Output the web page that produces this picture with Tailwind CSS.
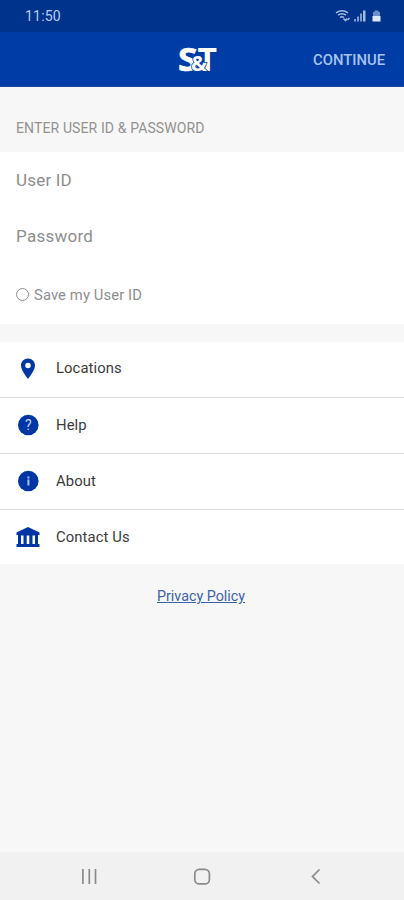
<!DOCTYPE html>
<html lang="en">
<head>
<meta charset="utf-8">
<meta name="viewport" content="width=device-width, initial-scale=1">
<title>Sign in</title>
<script src="https://cdn.jsdelivr.net/npm/@tailwindcss/browser@4"></script>
</head>
<body class="flex h-[900px] w-[404px] flex-col overflow-hidden bg-[#f7f7f7] font-['Roboto',sans-serif]">
  <div class="flex h-8 shrink-0 items-center justify-between bg-[#00338b] pr-[21px] pl-[25px]">
    <span class="text-[14px] leading-8 tracking-[0.2px] text-[#b9cdf0]">11:50</span>
    <svg class="h-4 w-[50px]" viewBox="0 0 50 16" fill="none">
      <g stroke="#a3bce3" stroke-width="1.5">
        <path d="M3 4.800Q9 .8 15 4.800M5 7.200Q9 4.400 13 7.200M7 9.500Q9 8 11 9.500"/>
        <path d="M10.500 10.500l2 2 1.500-2M14.500 12l2-2" stroke-width="1.500"/>
      </g>
      <path d="M21 11h2v2.500h-2zM24 8.500h2v5h-2zM27 5.500h2v8h-2z" fill="#7e9cd0"/>
      <path d="M30 2.500h2.500v11h-2.500z" fill="#a6bbdc"/>
      <path d="M41.500 2.500h4v1.500h1.500v4.500h-7V4h1.500z" fill="#6b91c5"/>
      <path d="M39.500 8h8v5.500h-8z" fill="#dce8f8"/>
    </svg>
  </div>
  <header class="grid h-[55px] shrink-0 grid-cols-3 items-center border-b border-[#15479f] bg-[#003ca5]">
    <span></span>
    <svg class="mr-[4px] h-[34px] w-[44px] justify-self-center overflow-visible" viewBox="0 0 44 34" font-family="Open Sans, sans-serif" fill="#fff" font-weight="700">
      <text x="0" y="29" font-size="33" textLength="19.500" lengthAdjust="spacingAndGlyphs" stroke="#fff" stroke-width=".6">S</text>
      <text x="19.500" y="29" font-size="33" textLength="19.500" lengthAdjust="spacingAndGlyphs">T</text>
      <text x="13" y="29" font-size="21" textLength="16" lengthAdjust="spacingAndGlyphs" stroke="#003ca5" stroke-width="1.500" paint-order="stroke">&amp;</text>
    </svg>
    <button class="justify-self-end pt-[2px] pr-[19px] text-[14.8px] font-medium text-[#a9c3ee]">CONTINUE</button>
  </header>
  <main class="flex flex-1 flex-col">
    <h1 class="flex h-[65px] items-center px-4 pt-[17px] text-[14px] tracking-[0.12px] text-[#929292]">ENTER USER ID &amp; PASSWORD</h1>
    <section class="flex h-[172px] flex-col bg-white px-4 text-[#8e8e8e]">
      <div class="flex h-[56px] items-center pt-px text-[17px] tracking-[0.2px]">User ID</div>
      <div class="flex h-[57px] items-center text-[17px] tracking-[0.25px]">Password</div>
      <label class="flex h-[59px] items-center gap-[5px] pt-[2px] text-[14.800px] tracking-[0.1px]">
        <span class="mb-[2px] h-[13px] w-[13px] rounded-full border-[1.5px] border-[#8e8e8e]"></span>Save my User ID
      </label>
    </section>
    <nav class="mt-[18px] flex h-[222px] flex-col bg-white text-[14.8px] tracking-[0.1px] text-[#3b3b3b]">
      <a class="flex h-14 items-center border-b border-[#dcdcdc] pb-[2px] pl-4">
        <svg class="mr-4 h-6 w-6" viewBox="0 0 24 24"><path d="M12 1.500c-4 0-7 3-7 7 0 5 7 13.300 7 13.300s7-8.300 7-13.300c0-4-3-7-7-7zm0 4.200a2.800 2.800 0 1 1 0 5.600 2.800 2.800 0 0 1 0-5.600z" fill="#0036a4"/></svg>Locations
      </a>
      <a class="flex h-14 items-center border-b border-[#dcdcdc] pb-px pl-4">
        <svg class="mr-4 h-6 w-6" viewBox="0 0 24 24"><circle cx="12.300" cy="12" r="10.300" fill="#0036a4"/><text x="12.300" y="17" text-anchor="middle" font-size="14" letter-spacing="0" font-family="Roboto, sans-serif" fill="#c5d4f3">?</text></svg>Help
      </a>
      <a class="flex h-14 items-center border-b border-[#dcdcdc] pb-px pl-4">
        <svg class="mr-4 h-6 w-6" viewBox="0 0 24 24"><circle cx="12.300" cy="12" r="10.300" fill="#0036a4"/><path d="M11.400 7.500h2v2h-2zM11.400 10.500h2v6h-2z" fill="#a9c0ea"/></svg>About
      </a>
      <a class="flex h-[54px] items-center pl-4">
        <svg class="mr-4 h-6 w-6" viewBox="0 0 24 24"><path d="M12 2l11.500 5.500V10H22v9h1.500v3H.500v-3H2v-9H.500V7.500zM5 10.500V19h2.500v-8.500zM10.700 10.500V19h2.600v-8.500zM16.500 10.500V19H19v-8.500z" fill="#0036a4" fill-rule="evenodd"/></svg>Contact Us
      </a>
    </nav>
    <a class="mt-[22px] mr-[2px] self-center text-[14.3px] leading-5 text-[#3d62a8] underline underline-offset-1">Privacy Policy</a>
  </main>
  <footer class="flex h-12 shrink-0 items-center bg-[#f1f1f1]">
    <svg class="h-12 w-[404px]" viewBox="0 0 404 48" fill="none" stroke="#8a8a8a" stroke-width="1.700">
      <path d="M82.900 17v15M89.300 17v15M95.500 17v15"/>
      <rect x="194.800" y="17.300" width="14.600" height="14.600" rx="4.500"/>
      <path d="M319.500 17.500l-7 7 7 7"/>
    </svg>
  </footer>
</body>
</html>
